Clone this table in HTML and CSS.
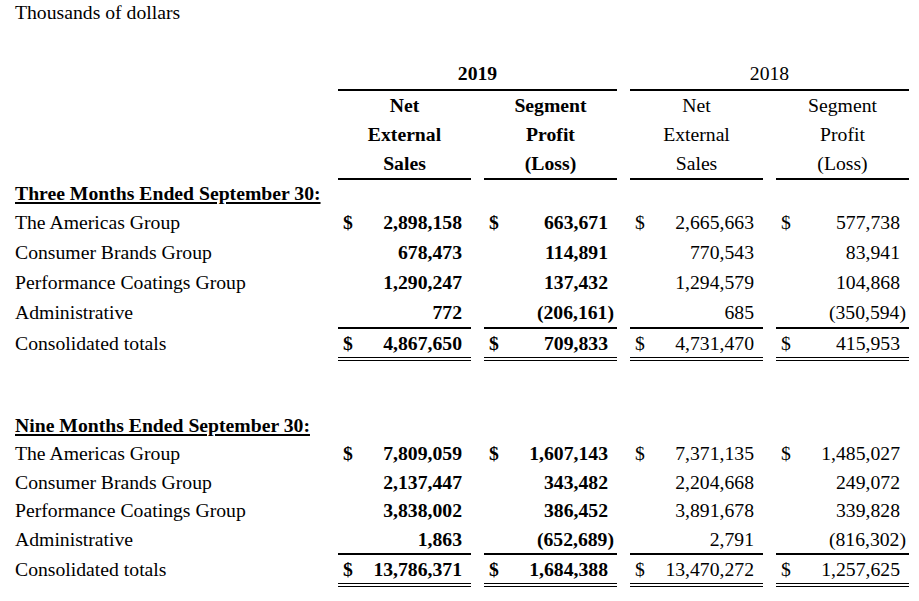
FILE: index.html
```html
<!DOCTYPE html>
<html lang="en">
<head>
<meta charset="utf-8">
<title>Segment Information</title>
<link rel="stylesheet" href="styles.css">
</head>
<body>
<div class="caption">Thousands of dollars</div>
<table class="seg">
  <colgroup>
    <col class="c-label">
    <col class="c-val">
    <col class="c-gap">
    <col class="c-val">
    <col class="c-gap">
    <col class="c-val">
    <col class="c-gap">
    <col class="c-val">
  </colgroup>
  <thead>
    <tr class="r-year">
      <th></th>
      <th colspan="3" class="year b">2019</th>
      <th></th>
      <th colspan="3" class="year">2018</th>
    </tr>
    <tr class="r-head">
      <th></th>
      <th class="b">Net</th><th></th>
      <th class="b">Segment</th><th></th>
      <th>Net</th><th></th>
      <th>Segment</th>
    </tr>
    <tr class="r-head">
      <th></th>
      <th class="b">External</th><th></th>
      <th class="b">Profit</th><th></th>
      <th>External</th><th></th>
      <th>Profit</th>
    </tr>
    <tr class="r-head r-head-last">
      <th></th>
      <th class="b line">Sales</th><th></th>
      <th class="b line">(Loss)</th><th></th>
      <th class="line">Sales</th><th></th>
      <th class="line">(Loss)</th>
    </tr>
  </thead>
  <tbody>
    <tr class="r-sec">
      <td class="sec" colspan="8"><span>Three Months Ended September 30:</span></td>
    </tr>
    <tr class="r-data">
      <td>The Americas Group</td>
      <td class="b"><div class="cell"><span>$</span><span>2,898,158</span></div></td><td></td>
      <td class="b"><div class="cell"><span>$</span><span>663,671</span></div></td><td></td>
      <td><div class="cell"><span>$</span><span>2,665,663</span></div></td><td></td>
      <td><div class="cell"><span>$</span><span>577,738</span></div></td>
    </tr>
    <tr class="r-data">
      <td>Consumer Brands Group</td>
      <td class="b"><div class="cell"><span></span><span>678,473</span></div></td><td></td>
      <td class="b"><div class="cell"><span></span><span>114,891</span></div></td><td></td>
      <td><div class="cell"><span></span><span>770,543</span></div></td><td></td>
      <td><div class="cell"><span></span><span>83,941</span></div></td>
    </tr>
    <tr class="r-data">
      <td>Performance Coatings Group</td>
      <td class="b"><div class="cell"><span></span><span>1,290,247</span></div></td><td></td>
      <td class="b"><div class="cell"><span></span><span>137,432</span></div></td><td></td>
      <td><div class="cell"><span></span><span>1,294,579</span></div></td><td></td>
      <td><div class="cell"><span></span><span>104,868</span></div></td>
    </tr>
    <tr class="r-data">
      <td>Administrative</td>
      <td class="b"><div class="cell"><span></span><span>772</span></div></td><td></td>
      <td class="b"><div class="cell"><span></span><span class="neg">(206,161)</span></div></td><td></td>
      <td><div class="cell"><span></span><span>685</span></div></td><td></td>
      <td><div class="cell"><span></span><span class="neg">(350,594)</span></div></td>
    </tr>
    <tr class="r-total">
      <td class="tot-label">Consolidated totals</td>
      <td class="b tot"><div class="cell"><span>$</span><span>4,867,650</span></div></td><td></td>
      <td class="b tot"><div class="cell"><span>$</span><span>709,833</span></div></td><td></td>
      <td class="tot"><div class="cell"><span>$</span><span>4,731,470</span></div></td><td></td>
      <td class="tot"><div class="cell"><span>$</span><span>415,953</span></div></td>
    </tr>
    <tr class="r-spacer"><td colspan="8"></td></tr>
    <tr class="r-sec">
      <td class="sec" colspan="8"><span>Nine Months Ended September 30:</span></td>
    </tr>
    <tr class="r-data r-tight">
      <td>The Americas Group</td>
      <td class="b"><div class="cell"><span>$</span><span>7,809,059</span></div></td><td></td>
      <td class="b"><div class="cell"><span>$</span><span>1,607,143</span></div></td><td></td>
      <td><div class="cell"><span>$</span><span>7,371,135</span></div></td><td></td>
      <td><div class="cell"><span>$</span><span>1,485,027</span></div></td>
    </tr>
    <tr class="r-data r-tight">
      <td>Consumer Brands Group</td>
      <td class="b"><div class="cell"><span></span><span>2,137,447</span></div></td><td></td>
      <td class="b"><div class="cell"><span></span><span>343,482</span></div></td><td></td>
      <td><div class="cell"><span></span><span>2,204,668</span></div></td><td></td>
      <td><div class="cell"><span></span><span>249,072</span></div></td>
    </tr>
    <tr class="r-data r-tight">
      <td>Performance Coatings Group</td>
      <td class="b"><div class="cell"><span></span><span>3,838,002</span></div></td><td></td>
      <td class="b"><div class="cell"><span></span><span>386,452</span></div></td><td></td>
      <td><div class="cell"><span></span><span>3,891,678</span></div></td><td></td>
      <td><div class="cell"><span></span><span>339,828</span></div></td>
    </tr>
    <tr class="r-data r-tight">
      <td>Administrative</td>
      <td class="b"><div class="cell"><span></span><span>1,863</span></div></td><td></td>
      <td class="b"><div class="cell"><span></span><span class="neg">(652,689)</span></div></td><td></td>
      <td><div class="cell"><span></span><span>2,791</span></div></td><td></td>
      <td><div class="cell"><span></span><span class="neg">(816,302)</span></div></td>
    </tr>
    <tr class="r-total">
      <td class="tot-label">Consolidated totals</td>
      <td class="b tot"><div class="cell"><span>$</span><span>13,786,371</span></div></td><td></td>
      <td class="b tot"><div class="cell"><span>$</span><span>1,684,388</span></div></td><td></td>
      <td class="tot"><div class="cell"><span>$</span><span>13,470,272</span></div></td><td></td>
      <td class="tot"><div class="cell"><span>$</span><span>1,257,625</span></div></td>
    </tr>
  </tbody>
</table>
</body>
</html>
```

FILE: styles.css
```css
html, body {
  background: #ffffff;
}

body {
  margin: 0;
  padding: 1px 0 0 15px;
  font-family: "Liberation Serif", "Times New Roman", serif;
  font-size: 19.7px;
  color: #000000;
}

.caption {
  line-height: 22px;
}

.seg {
  margin-top: 35px;
  border-collapse: separate;
  border-spacing: 0;
  table-layout: fixed;
  width: 894px;
}

.c-label { width: 323px; }
.c-val { width: 133px; }
.c-gap { width: 13px; }

.seg th,
.seg td {
  padding: 0;
  vertical-align: top;
  white-space: nowrap;
}

.seg th {
  font-weight: normal;
  text-align: center;
}

.seg .b {
  font-weight: bold;
}

.r-year th {
  line-height: 31px;
}

.year {
  border-bottom: 2px solid #000000;
}

.r-head th {
  line-height: 29px;
}

.line {
  border-bottom: 2px solid #000000;
}

.r-sec td {
  line-height: 27px;
}

.sec span {
  font-weight: bold;
  text-decoration: underline;
  text-decoration-thickness: 2px;
  text-underline-offset: 2px;
}

.r-data td {
  line-height: 30px;
}

.r-data.r-tight td {
  line-height: 28.5px;
}

.r-total td {
  line-height: 28px;
}

.tot {
  border-top: 2px solid #000000;
  border-bottom: 4px double #000000;
}

.tot-label {
  border-top: 2px solid transparent;
}

.r-spacer td {
  height: 51px;
}

.cell {
  display: flex;
  justify-content: space-between;
  padding: 0 9px 0 5px;
}

.neg {
  margin-right: -6px;
}
```
